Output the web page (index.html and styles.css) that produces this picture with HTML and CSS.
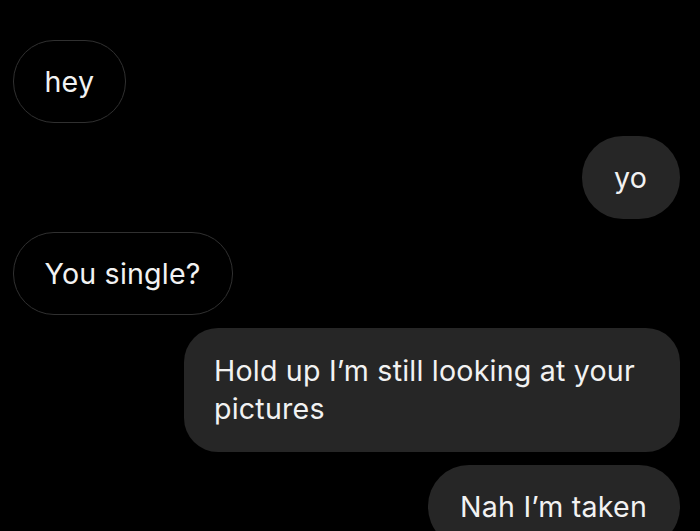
FILE: index.html
```
<!DOCTYPE html>
<html>
<head>
<meta charset="utf-8">
<link rel="stylesheet" href="styles.css">
</head>
<body>
<div class="chat">
  <div class="msg in">hey</div>
  <div class="msg out">yo</div>
  <div class="msg in">You single?</div>
  <div class="msg out wide">Hold up I’m still looking at your pictures</div>
  <div class="msg out">Nah I’m taken</div>
</div>
</body>
</html>
```
FILE: styles.css
```
html, body {
  margin: 0;
  padding: 0;
  background: #000;
  height: 100%;
  overflow: hidden;
}
.chat {
  display: flex;
  flex-direction: column;
  gap: 13px;
  padding: 40px 20px 0 13px;
  font-family: Inter, "Liberation Sans", sans-serif;
  font-size: 28.6px;
  letter-spacing: 0.2px;
  line-height: 38px;
  color: #f2f2f2;
}
.msg {
  padding: 22.5px 33px 22.5px 32px;
  border-radius: 41px;
}
.in {
  align-self: flex-start;
  border: 1.5px solid #303030;
  padding: 21.5px 31px 21.5px 30.5px;
}
.out {
  align-self: flex-end;
  background: #262626;
}
.wide {
  width: 496px;
  box-sizing: border-box;
  border-radius: 34px;
  padding: 24px 36px 24px 30px;
}
```
